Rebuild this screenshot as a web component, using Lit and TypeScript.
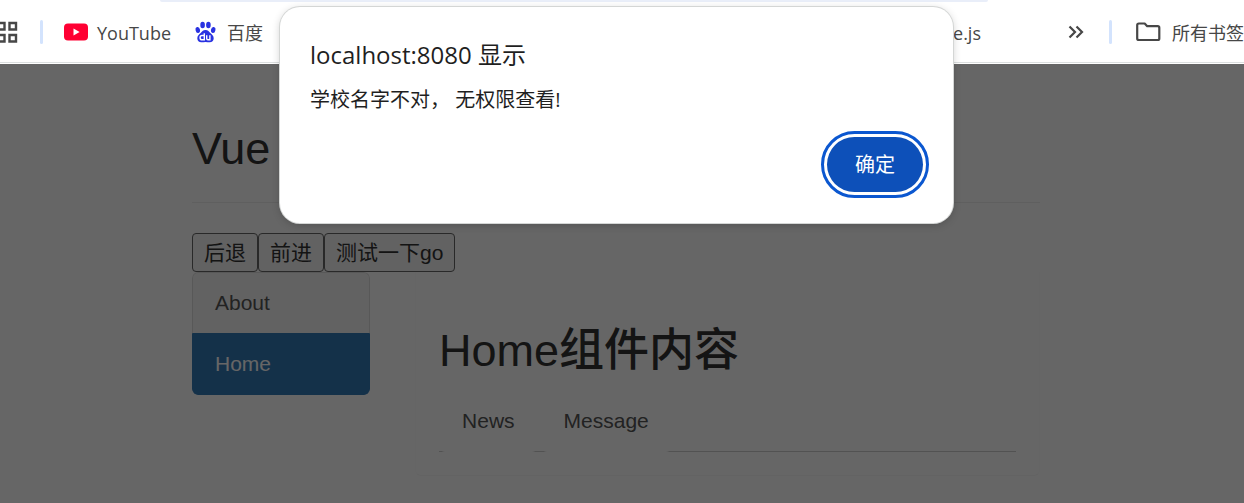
import { LitElement, html, css } from "lit";
import { customElement } from "lit/decorators.js";

@customElement("bookmarks-bar")
class BookmarksBar extends LitElement {
  static styles = css`
    :host {
      display: block;
      height: 64px;
      box-sizing: border-box;
      background: #fff;
      border-bottom: 1px solid #fff;
      font: 18px/24px "Open Sans", "Noto Sans CJK SC", sans-serif;
      color: #474747;
      overflow: hidden;
    }
    .omnibox {
      height: 2px;
      margin: 0 256px 0 160px;
      background: #e9eef9;
      border-radius: 0 0 8px 8px;
    }
    .row {
      display: flex;
      align-items: center;
      height: 60px;
      border-bottom: 1px solid #dcdfdf;
    }
    .apps {
      width: 20px;
      margin-left: -2px;
    }
    .divider {
      width: 3px;
      height: 24px;
      border-radius: 2px;
      background: #d3e3fd;
    }
    .after-apps {
      margin: 0 21px 0 22px;
    }
    a,
    button {
      display: flex;
      align-items: center;
      padding: 0;
      border: 0;
      background: none;
      font: inherit;
      color: inherit;
      text-decoration: none;
      white-space: nowrap;
      flex: none;
    }
    a {
      gap: 8px;
    }
    a span {
      padding-top: 2px;
    }
    .baidu {
      margin-left: 24px;
      gap: 11px;
    }
    .vue {
      margin-left: auto;
    }
    .more {
      margin: 0 25px 0 87px;
    }
    .all {
      margin-left: 24px;
      gap: 11px;
    }
    svg {
      display: block;
      flex: none;
    }
  `;

  render() {
    return html`
      <div class="omnibox"></div>
      <nav class="row">
        <button class="apps" aria-label="Apps">
          <svg width="20" height="22" viewBox="0 0 20 22" fill="none" stroke="#474747" stroke-width="2.400">
            <path d="M0 2h6.500v6.500H0zM11.500 2H18v6.500h-6.500zM0 14h6.500v6.500H0zM11.500 14H18v6.500h-6.500z" />
          </svg>
        </button>
        <span class="divider after-apps"></span>
        <a href="#youtube">
          <svg width="25" height="18" viewBox="0 0 25 18">
            <rect width="24" height="17" x="0" y="0.5" rx="4" fill="#ff0033" />
            <path d="M9.500 5.600v6.800L15.600 9z" fill="#fff" />
          </svg>
          <span>YouTube</span>
        </a>
        <a class="baidu" href="#baidu">
          <svg width="21" height="22" viewBox="0 0 21 22" fill="#2932e1">
            <ellipse cx="7.6" cy="4" rx="2.3" ry="3.2" />
            <ellipse cx="13.4" cy="4" rx="2.3" ry="3.2" />
            <ellipse cx="2.8" cy="9" rx="2.2" ry="3" transform="rotate(-12 2.8 9)" />
            <ellipse cx="18.2" cy="9" rx="2.2" ry="3" transform="rotate(12 18.2 9)" />
            <path d="M10.500 9c2.600 0 3.600 1.800 4.800 3.100 1.500 1.500 3.400 2.600 3.400 5.200 0 2.500-1.700 3.900-4 3.900-1.500 0-2.700-.3-4.200-.3s-2.700.3-4.200.3c-2.300 0-4-1.400-4-3.900 0-2.600 1.900-3.700 3.400-5.200C6.900 10.800 7.900 9 10.500 9z" />
            <path d="M9.300 12.200v6.600H7.200a1.900 1.900 0 0 1 0-4.300h2M11.700 14.300v3.300q0 1.200 1.200 1.200h2v-4.600" fill="none" stroke="#fff" stroke-width="1.400" />
          </svg>
          <span>百度</span>
        </a>
        <a class="vue" href="#vue"><span>Vue.js</span></a>
        <button class="more" aria-label="More bookmarks">
          <svg width="16" height="14" viewBox="0 0 16 14" fill="none" stroke="#474747" stroke-width="2.200">
            <path d="M1.500 1.500 7 7l-5.500 5.500M8.500 1.500 14 7l-5.500 5.500" />
          </svg>
        </button>
        <span class="divider"></span>
        <a class="all" href="#all">
          <svg width="25" height="20" viewBox="0 0 25 20" fill="none" stroke="#474747" stroke-width="2.200" stroke-linejoin="round">
            <path d="M1.200 3.200Q1.200 1.500 2.900 1.500H8.700L11.200 4.200h10.600q1.500 0 1.500 1.500v10.800q0 1.500-1.500 1.500H2.900Q1.200 18 1.200 16.500z" />
          </svg>
          <span>所有书签</span>
        </a>
      </nav>
    `;
  }
}

@customElement("router-page")
class RouterPage extends LitElement {
  static styles = css`
    :host {
      display: block;
      box-sizing: border-box;
      padding: 60px 204px 27px 192px;
      background: #fff;
      color: #333;
      font: 21px/30px "Liberation Sans", "Noto Sans CJK SC", sans-serif;
    }
    h2 {
      margin: 0;
      font-size: 45px;
      line-height: 50px;
      font-weight: 500;
    }
    .header {
      padding-bottom: 28px;
      border-bottom: 1px solid #eee;
      margin-bottom: 30px;
    }
    .buttons {
      display: flex;
    }
    button {
      height: 39px;
      padding: 0 11px;
      border: 1px solid #666;
      border-radius: 4px;
      background: #f4f4f4;
      color: #333;
      font: inherit;
      white-space: nowrap;
    }
    .columns {
      display: flex;
      align-items: flex-start;
      gap: 45px;
    }
    .list {
      flex: 0 0 21%;
      border-radius: 6px;
      overflow: hidden;
    }
    .list a {
      display: block;
      box-sizing: border-box;
      padding: 15px 22px;
      border: 1px solid #ddd;
      border-bottom: 0;
      border-radius: 6px 6px 0 0;
      background: #f5f5f5;
      color: #555;
      text-decoration: none;
    }
    .list a.active {
      border-color: #337ab7;
      border-bottom: 1px solid #337ab7;
      border-radius: 0 0 6px 6px;
      background: #337ab7;
      color: #fff;
    }
    .panel {
      flex: 1;
      padding: 54px 23px 23px;
      border: 1px solid #fcfcfc;
      border-top: 0;
      border-bottom-color: #f7f7f7;
      border-radius: 0 0 6px 6px;
    }
    .tabs {
      display: flex;
      gap: 3px;
      margin: 13px 0 0;
      padding: 0;
      list-style: none;
      border-bottom: 1px solid #ccc;
    }
    .tabs a {
      display: block;
      padding: 17px 23px 16px;
      margin-bottom: -1px;
      border-radius: 6px;
      background: #fff;
      color: #555;
      text-decoration: none;
    }
  `;

  render() {
    return html`
      <div class="header"><h2>Vue</h2></div>
      <div class="buttons">
        <button>后退</button><button>前进</button><button>测试一下go</button>
      </div>
      <div class="columns">
        <nav class="list">
          <a href="#about">About</a>
          <a class="active" href="#home">Home</a>
        </nav>
        <section class="panel">
          <h2>Home组件内容</h2>
          <ul class="tabs">
            <li><a href="#news">News</a></li>
            <li><a href="#message">Message</a></li>
          </ul>
        </section>
      </div>
    `;
  }
}

@customElement("alert-box")
class AlertBox extends LitElement {
  static styles = css`
    :host {
      display: flex;
      flex-direction: column;
      box-sizing: border-box;
      padding: 32px 30px 31px 30px;
      border-radius: 20px;
      background: #fff;
      box-shadow: 0 0 0 1px #d4d6d5, 0 2px 8px rgba(0, 0, 0, 0.2);
      color: #1f1f1f;
      font: 20px/28px "Open Sans", "Noto Sans CJK SC", sans-serif;
    }
    h1 {
      margin: 0;
      font-size: 24px;
      line-height: 32px;
      font-weight: 400;
    }
    p {
      margin: 15px 0 23px;
    }
    button {
      align-self: flex-end;
      width: 96px;
      height: 55px;
      padding: 0;
      border: 0;
      border-radius: 28px;
      background: #0d50b9;
      outline: 3px solid #0b57d0;
      outline-offset: 3px;
      color: #fff;
      font: inherit;
    }
  `;

  render() {
    return html`
      <h1>localhost:8080 显示</h1>
      <p>学校名字不对， 无权限查看!</p>
      <button>确定</button>
    `;
  }
}

@customElement("app-root")
class AppRoot extends LitElement {
  static styles = css`
    :host {
      display: flex;
      flex-direction: column;
      position: relative;
      min-height: 100vh;
      overflow: hidden;
    }
    .view {
      position: relative;
      flex: 1;
      background: #fff;
    }
    .scrim {
      position: absolute;
      inset: 0;
      background: rgba(0, 0, 0, 0.6);
    }
    .alert {
      position: absolute;
      top: 7px;
      left: calc(50% - 342px);
      width: 673px;
    }
  `;

  render() {
    return html`
      <bookmarks-bar></bookmarks-bar>
      <main class="view">
        <router-page></router-page>
        <div class="scrim"></div>
      </main>
      <alert-box class="alert" role="alertdialog" aria-label="localhost:8080 显示"></alert-box>
    `;
  }
}
